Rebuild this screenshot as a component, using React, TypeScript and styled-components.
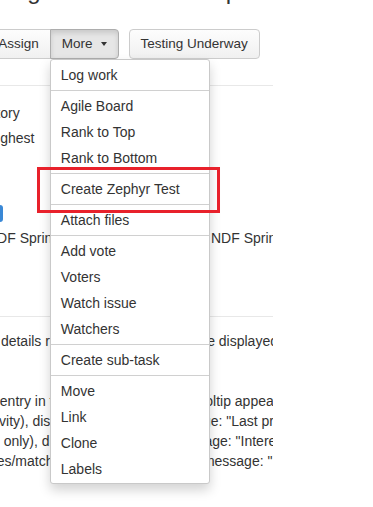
import styled, { createGlobalStyle } from "styled-components";

const GlobalStyle = createGlobalStyle`
  html, body {
    margin: 0;
    padding: 0;
    background: #fff;
  }
  body {
    font-family: "Liberation Sans", Arial, sans-serif;
    color: #333;
  }
`;

const Screen = styled.div`
  position: relative;
  width: 373px;
  height: 507px;
  overflow: hidden;
  background: #fff;
`;

/* the issue page is scrolled sideways and cut at its right edge */
const Viewport = styled.div`
  width: 273px;
  height: 507px;
  overflow: hidden;
`;

const Page = styled.div`
  margin-left: -82px;
  width: 420px;
  font-size: 14px;
`;

const Heading = styled.h1`
  margin: -24px 0 0;
  font-size: 24px;
  line-height: 30px;
  font-weight: 400;
  color: #333;
  white-space: nowrap;
`;

const Toolbar = styled.div`
  display: flex;
  align-items: flex-start;
  gap: 4px;
  margin-top: 23px;
  padding-left: 17px;
`;

const BtnGroup = styled.div`
  display: inline-flex;
`;

const Dropdown = styled.div`
  position: relative;
  display: inline-flex;
  margin-left: -1px;
`;

const Button = styled.button<{ $active?: boolean; $group?: "first" | "last"; $gap?: number }>`
  font-family: "Liberation Sans", Arial, sans-serif;
  font-size: 13.5px;
  line-height: 20px;
  padding: 4px 11px;
  color: #333;
  background: ${(p) => (p.$active ? "#e6e6e6" : "linear-gradient(#fdfdfd, #f0f0f0)")};
  border: 1px solid ${(p) => (p.$active ? "#adadad" : "#ccc")};
  border-radius: ${(p) =>
    p.$group === "first" ? "4px 0 0 4px" : p.$group === "last" ? "0 4px 4px 0" : "4px"};
  box-shadow: ${(p) => (p.$active ? "inset 0 3px 5px rgba(0, 0, 0, 0.125)" : "none")};
  margin-left: ${(p) => p.$gap ?? 0}px;
  white-space: nowrap;
  display: inline-flex;
  align-items: center;
`;

const Caret = styled.span`
  display: inline-block;
  width: 0;
  height: 0;
  margin-left: 8px;
  border-top: 4px solid #333;
  border-left: 3.5px solid transparent;
  border-right: 3.5px solid transparent;
`;

const Menu = styled.ul`
  position: absolute;
  top: 100%;
  left: 0;
  z-index: 10;
  margin: 0;
  padding: 2px 0 1px;
  list-style: none;
  width: 158px;
  background: #fff;
  border: 1px solid #c9c9c9;
  border-radius: 3px;
  box-shadow: 0 6px 12px rgba(0, 0, 0, 0.175);
`;

const MenuItem = styled.li`
  padding: 3px 10px;
  font-size: 14px;
  line-height: 20px;
  color: #333;
  white-space: nowrap;
`;

const Divider = styled.li`
  height: 1px;
  margin: 2px 0;
  background: #d0d0d0;
`;

const Rule = styled.div<{ $top: number; $bottom: number }>`
  border-top: 1px solid #e8e8e8;
  margin-top: ${(p) => p.$top}px;
  margin-bottom: ${(p) => p.$bottom}px;
`;

const Details = styled.div`
  display: grid;
  grid-template-columns: 60px 140px 66px 1fr;
  grid-auto-rows: 25px;
  column-gap: 9px;
  line-height: 25px;
`;

const Label = styled.div`
  color: #707070;
  white-space: nowrap;
  overflow: hidden;
`;

const Value = styled.div`
  display: flex;
  align-items: center;
  white-space: nowrap;
`;

const Swatch = styled.span`
  width: 16px;
  height: 17px;
  border-radius: 3px;
  background: #3a88d6;
`;

const Description = styled.div`
  padding-left: 25px;
  line-height: 20px;
`;

const Para = styled.p<{ $gap: number }>`
  margin: 0 0 ${(p) => p.$gap}px;
  white-space: nowrap;
`;

/* red annotation frame drawn over the screenshot */
const Highlight = styled.div`
  position: absolute;
  left: 37px;
  top: 167px;
  width: 177px;
  height: 40px;
  border: 3px solid #e8212b;
  pointer-events: none;
  z-index: 20;
`;

const menu: (string | null)[] = [
  "Log work",
  null,
  "Agile Board",
  "Rank to Top",
  "Rank to Bottom",
  null,
  "Create Zephyr Test",
  null,
  "Attach files",
  null,
  "Add vote",
  "Voters",
  "Watch issue",
  "Watchers",
  null,
  "Create sub-task",
  null,
  "Move",
  "Link",
  "Clone",
  "Labels",
];

const details = [
  ["Type:", "Story", "", ""],
  ["Priority:", "Highest", "", ""],
  ["Affects Version/s:", "", "", ""],
  ["Component/s:", "", "", ""],
  ["Epic:", "swatch", "", ""],
  ["Sprint:", "NDF Sprint 12", "Fix Version/s:", "NDF Sprint 12 Release"],
];

function App() {
  return (
    <Screen>
      <GlobalStyle />
      <Viewport>
        <Page>
          <Heading>Activity Log in the Chat Tooltip</Heading>
          <Toolbar>
            <Button>Edit</Button>
            <BtnGroup>
              <Button $group="first">Assign</Button>
              <Dropdown>
                <Button $group="last" $active>
                  More
                  <Caret />
                </Button>
                <Menu>
                  {menu.map((item, i) =>
                    item ? <MenuItem key={i}>{item}</MenuItem> : <Divider key={i} />
                  )}
                </Menu>
              </Dropdown>
            </BtnGroup>
            <Button $gap={6}>Testing Underway</Button>
          </Toolbar>
          <Rule $top={26} $bottom={15} />
          <Details>
            {details.map((row) =>
              row.map((cell, j) =>
                j % 2 === 0 ? (
                  <Label key={row[0] + j}>{cell}</Label>
                ) : (
                  <Value key={row[0] + j}>{cell === "swatch" ? <Swatch /> : cell}</Value>
                )
              )
            )}
          </Details>
          <Rule $top={65} $bottom={14} />
          <Description>
            <Para $gap={40}>Activity's details regarding each action to be displayed.</Para>
            <Para $gap={0}>
              On each entry in the user activity feed a tooltip appears with
              <br />
              (own activity), display a tooltip with message: "Last profile update"
              <br />
              (all users only), display a tooltip with message: "Interested in you"
              <br />
              (other likes/matches), display a tooltip via message: "It's a match"
            </Para>
          </Description>
        </Page>
      </Viewport>
      <Highlight />
    </Screen>
  );
}

export default App;
